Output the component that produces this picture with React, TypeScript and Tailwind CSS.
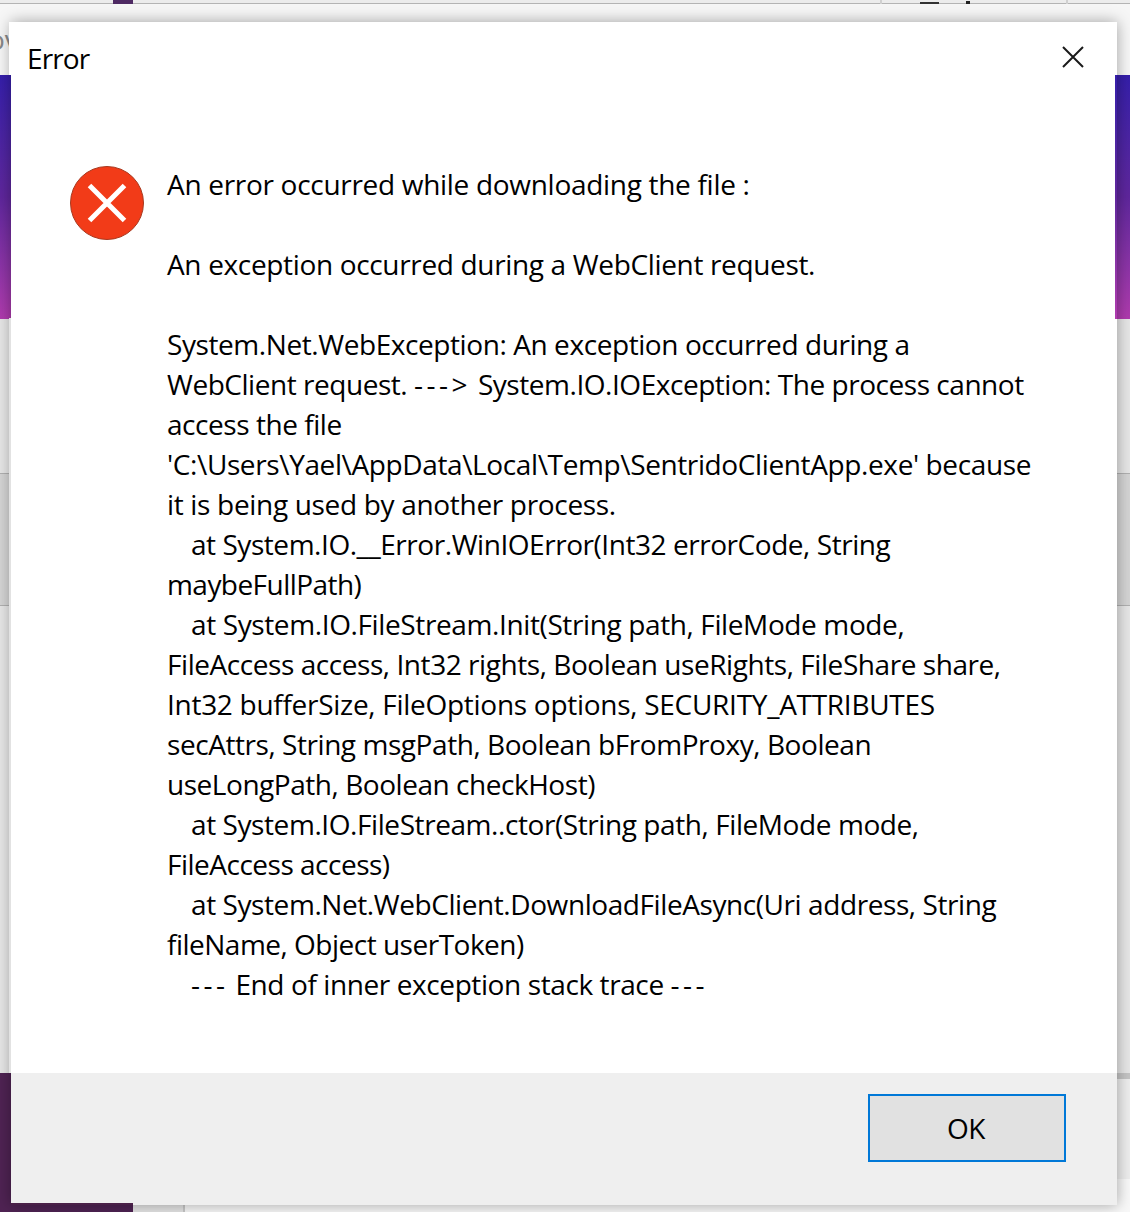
import React from "react";

const lines: { text: string; cls: string; indent?: boolean }[] = [
  { text: "An error occurred while downloading the file :", cls: "tracking-[-0.3px]" },
  { text: "", cls: "" },
  { text: "An exception occurred during a WebClient request.", cls: "tracking-[-0.34px]" },
  { text: "", cls: "" },
  { text: "System.Net.WebException: An exception occurred during a", cls: "tracking-[-0.42px]" },
  { text: "WebClient request. ---> System.IO.IOException: The process cannot", cls: "tracking-[-0.46px]" },
  { text: "access the file", cls: "tracking-[-0.45px]" },
  { text: "'C:\\Users\\Yael\\AppData\\Local\\Temp\\SentridoClientApp.exe' because", cls: "tracking-[-0.38px]" },
  { text: "it is being used by another process.", cls: "tracking-[-0.32px]" },
  { text: "at System.IO.__Error.WinIOError(Int32 errorCode, String", cls: "tracking-[-0.45px]", indent: true },
  { text: "maybeFullPath)", cls: "tracking-[-0.55px]" },
  { text: "at System.IO.FileStream.Init(String path, FileMode mode,", cls: "tracking-[-0.38px]", indent: true },
  { text: "FileAccess access, Int32 rights, Boolean useRights, FileShare share,", cls: "tracking-[-0.44px]" },
  { text: "Int32 bufferSize, FileOptions options, SECURITY_ATTRIBUTES", cls: "tracking-[-0.28px]" },
  { text: "secAttrs, String msgPath, Boolean bFromProxy, Boolean", cls: "tracking-[-0.44px]" },
  { text: "useLongPath, Boolean checkHost)", cls: "tracking-[-0.46px]" },
  { text: "at System.IO.FileStream..ctor(String path, FileMode mode,", cls: "tracking-[-0.42px]", indent: true },
  { text: "FileAccess access)", cls: "tracking-[-0.5px]" },
  { text: "at System.Net.WebClient.DownloadFileAsync(Uri address, String", cls: "tracking-[-0.42px]", indent: true },
  { text: "fileName, Object userToken)", cls: "tracking-[-0.5px]" },
  { text: "--- End of inner exception stack trace ---", cls: "tracking-[-0.4px]", indent: true },
];

function MessageLine({ text, cls, indent }: { text: string; cls: string; indent?: boolean }) {
  const parts = text.split(/(---+>?)/);
  return (
    <div className={`h-[40px] ${indent ? "pl-[24px]" : ""} ${cls}`}>
      {parts.map((p, i) =>
        p.startsWith("---") ? (
          <span key={i} className="tracking-[3.5px]">{p}</span>
        ) : (
          <span key={i}>{p}</span>
        )
      )}
    </div>
  );
}

function Backdrop() {
  return (
    <div className="flex flex-col h-[1212px] w-[1130px] overflow-hidden bg-[#e8e8e8]">
      <div className="h-[4px] shrink-0 flex items-start bg-[#ececec] border-b border-[#b4b4b4]">
        <div className="w-[113px]" />
        <div className="w-[20px] h-[5px] bg-[#4e2a63]" />
        <div className="w-[747px]" />
        <div className="w-[2px] h-[4px] bg-[#d0d0d0]" />
        <div className="w-[38px]" />
        <div className="w-[19px] h-[2px] mt-[2px] bg-[#333333]" />
        <div className="w-[27px]" />
        <div className="w-[4px] h-[3px] mt-[1px] bg-[#222222]" />
        <div className="w-[96px]" />
        <div className="w-[2px] h-[4px] bg-[#d0d0d0]" />
      </div>
      <div className="h-[71px] shrink-0 bg-[#f6f6f6] overflow-hidden text-[28px] text-[#888888] pt-[17px] leading-[36px]">
        <span className="ml-[-12px]">ov</span>
      </div>
      <div className="h-[244px] shrink-0 bg-gradient-to-b from-[#351eaa] via-[#5f269c] to-[#b03bae]" />
      <div className="h-[155px] shrink-0 bg-[#e6e6e6] border-b border-[#b0b0b0]" />
      <div className="h-[132px] shrink-0 bg-[#d4d4d4] border-b border-[#b0b0b0]" />
      <div className="h-[467px] shrink-0 bg-[#e6e6e6]" />
      <div className="flex-1 flex">
        <div className="w-[133px] bg-[#4f2353]" />
        <div className="w-[50px] bg-[#e4e4e4]" />
        <div className="w-[2px] bg-[#c8c8c8]" />
        <div className="flex-1 flex flex-col bg-[#ededed]">
          <div className="h-[6px] bg-[#c4c4c4]" />
          <div className="flex-1" />
          <div className="h-[33px] bg-[#f8f8f8]" />
        </div>
      </div>
    </div>
  );
}

export default function App() {
  return (
    <div className="relative w-[1130px] h-[1212px] overflow-hidden font-['Open_Sans',sans-serif]">
      <Backdrop />
      <div className="absolute left-[11px] top-[22px] w-[1106px] h-[1183px] bg-white flex flex-col shadow-[0_0_14px_rgba(0,0,0,0.35)]">
        {/* window-edge artefacts: backdrop colours bleeding over the dialog frame */}
        <div className="absolute left-[-2px] top-0 w-[2px] h-[53px] bg-white" />
        <div className="absolute left-[-2px] top-[296px] w-[2px] h-[755px] bg-[#e2e2e2]" />
        <div className="absolute right-0 top-[53px] w-[2px] h-[244px] bg-gradient-to-b from-[#351eaa] via-[#5f269c] to-[#b03bae]" />
        <div className="absolute left-0 bottom-0 w-[122px] h-[2px] bg-[#4a2048]" />

        <div className="h-[72px] shrink-0 flex items-start justify-between pl-[16px] pr-[33px]">
          <span className="text-[28px] leading-[38px] mt-[17px] tracking-[-0.9px] text-black">Error</span>
          <svg width="22" height="22" viewBox="0 0 22 22" className="mt-[24px]" fill="none" stroke="#1a1a1a" strokeWidth="2">
            <path d="M1 1 L21 21 M21 1 L1 21" />
          </svg>
        </div>
        <div className="flex-1 flex pl-[59px] pt-[72px]">
          <svg width="76" height="76" viewBox="0 0 76 76" className="shrink-0">
            <circle cx="37" cy="37" r="36.5" fill="#f23b18" stroke="#a8391f" strokeWidth="1" />
            <path d="M19.5 19.5 L54.5 54.5 M54.5 19.5 L19.5 54.5" stroke="#ffffff" strokeWidth="5" />
          </svg>
          <div className="ml-[21px] mt-[-2px] whitespace-pre text-[28px] leading-[40px] text-black">
            {lines.map((l, i) => (
              <MessageLine key={i} text={l.text} cls={l.cls} indent={l.indent} />
            ))}
          </div>
        </div>
        <div className="h-[132px] shrink-0 bg-[#efefef] flex justify-end items-start pr-[51px] pt-[21px]">
          <button className="w-[198px] h-[68px] border-2 border-[#0078d7] bg-[#e1e1e1] pr-[2px] text-[28px] tracking-[-0.4px] text-black">OK</button>
        </div>
      </div>
    </div>
  );
}
